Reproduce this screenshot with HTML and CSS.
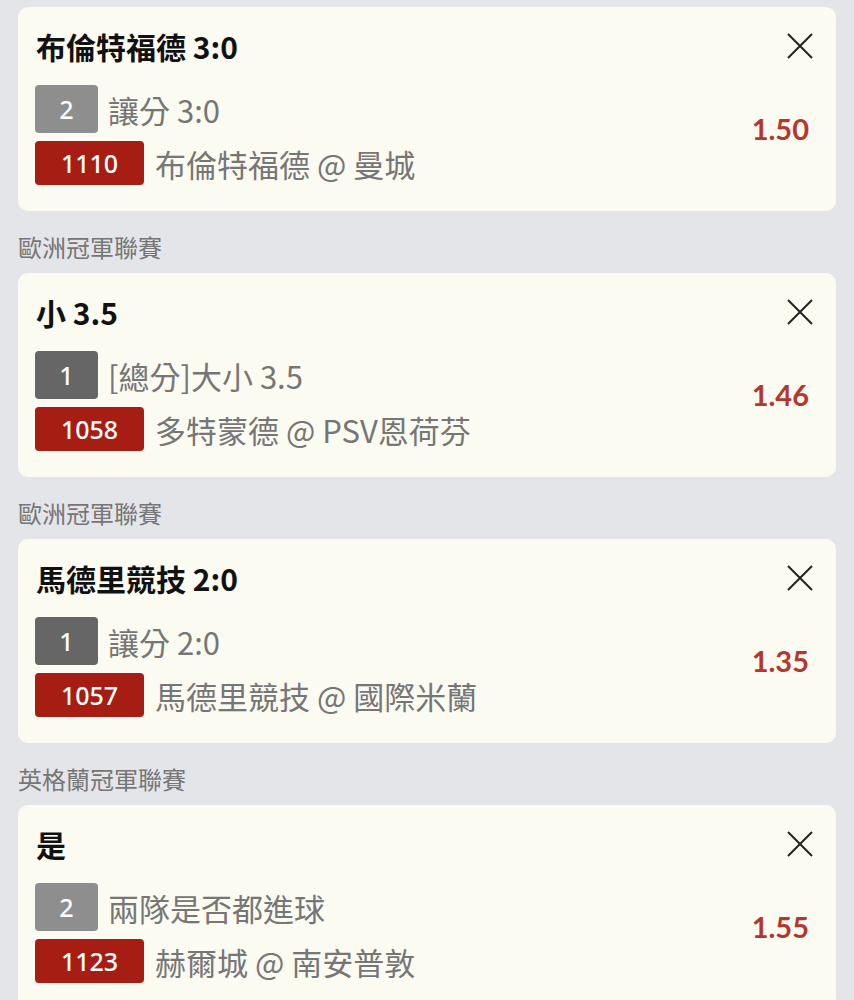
FILE: index.html
```html
<!DOCTYPE html>
<html>
<head>
	<title>投注單</title>
	<meta charset="utf-8">
	<link rel="stylesheet" href="styles.css">
</head>
<body>
	<div class="slip">

		<div class="card">
			<div class="card-head">
				<span class="pick">布倫特福德 3:0</span>
				<svg class="close" viewBox="0 0 26 26"><path d="M1 1L25 25M25 1L1 25"/></svg>
			</div>
			<div class="card-body">
				<div class="lines">
					<p class="line"><span class="tag tag-2">2</span>讓分 3:0</p>
					<p class="line"><span class="code">1110</span>布倫特福德 @ 曼城</p>
				</div>
				<span class="odds">1.50</span>
			</div>
		</div>

		<p class="league">歐洲冠軍聯賽</p>
		<div class="card">
			<div class="card-head">
				<span class="pick">小 3.5</span>
				<svg class="close" viewBox="0 0 26 26"><path d="M1 1L25 25M25 1L1 25"/></svg>
			</div>
			<div class="card-body">
				<div class="lines">
					<p class="line"><span class="tag tag-1">1</span>[總分]大小 3.5</p>
					<p class="line"><span class="code">1058</span>多特蒙德 @ PSV恩荷芬</p>
				</div>
				<span class="odds">1.46</span>
			</div>
		</div>

		<p class="league">歐洲冠軍聯賽</p>
		<div class="card">
			<div class="card-head">
				<span class="pick">馬德里競技 2:0</span>
				<svg class="close" viewBox="0 0 26 26"><path d="M1 1L25 25M25 1L1 25"/></svg>
			</div>
			<div class="card-body">
				<div class="lines">
					<p class="line"><span class="tag tag-1">1</span>讓分 2:0</p>
					<p class="line"><span class="code">1057</span>馬德里競技 @ 國際米蘭</p>
				</div>
				<span class="odds">1.35</span>
			</div>
		</div>

		<p class="league">英格蘭冠軍聯賽</p>
		<div class="card">
			<div class="card-head">
				<span class="pick">是</span>
				<svg class="close" viewBox="0 0 26 26"><path d="M1 1L25 25M25 1L1 25"/></svg>
			</div>
			<div class="card-body">
				<div class="lines">
					<p class="line"><span class="tag tag-2">2</span>兩隊是否都進球</p>
					<p class="line"><span class="code">1123</span>赫爾城 @ 南安普敦</p>
				</div>
				<span class="odds">1.55</span>
			</div>
		</div>

	</div>
</body>
</html>
```

FILE: styles.css
```css
body{
	margin: 0;
	background-color: #e4e5e9;
	font-family: "Noto Sans CJK TC", sans-serif;
}

.slip{
	padding: 7px 18px 0;
}

/* 卡片 */
.card{
	background-color: #fcfbf2;
	border-radius: 10px;
	padding: 20px 23px 26px 17px;
}

.card-head{
	height: 38px;
	display: flex;
	justify-content: space-between;
	align-items: center;
	padding-left: 1px;
}

.pick{
	font-size: 30px;
	font-weight: bold;
	line-height: 1;
	color: #111;
}

.close{
	width: 26px;
	height: 26px;
	stroke: #222;
	stroke-width: 2;
	fill: none;
}

.card-body{
	margin-top: 20px;
	display: flex;
	justify-content: space-between;
	align-items: center;
}

.lines{
	display: flex;
	flex-direction: column;
	gap: 8px;
}

.line{
	margin: 0;
	display: flex;
	align-items: center;
	gap: 10px;
	font-size: 31px;
	line-height: 1;
	color: #767676;
}

/* 標籤 */
.tag, .code{
	display: inline-flex;
	justify-content: center;
	align-items: center;
	color: #fff;
	font-family: "Noto Sans", sans-serif;
	font-size: 25px;
	font-weight: 500;
	border-radius: 4px;
}

.tag{
	width: 63px;
	height: 48px;
}

.tag-2{
	background-color: #8e8e8e;
}

.tag-1{
	background-color: #666666;
}

.code{
	width: 109px;
	height: 44px;
	background-color: #a61d14;
	margin-right: 1px;
}

.odds{
	margin-right: 4px;
	margin-top: -13px;
	font-family: "Lato", sans-serif;
	font-size: 29px;
	font-weight: bold;
	color: #b3372d;
}

/* 聯賽名稱 */
.league{
	margin: 0;
	padding: 19px 0 9px;
	line-height: 34px;
	font-size: 24px;
	color: #767676;
}
```
